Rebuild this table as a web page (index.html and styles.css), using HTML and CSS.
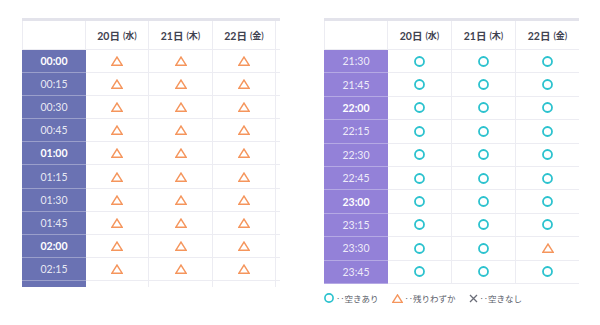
FILE: index.html
```html
<!DOCTYPE html>
<html lang="ja">
<head>
<meta charset="utf-8">
<title>空き状況</title>
<link rel="stylesheet" href="styles.css">
</head>
<body>
<svg class="defs" width="0" height="0" aria-hidden="true">
  <symbol id="tri" viewBox="0 0 11 9"><polygon points="5.5,0.9 10.2,8.3 0.8,8.3" fill="none" stroke="#f5955c" stroke-width="1.35" stroke-linejoin="miter"/></symbol>
  <symbol id="ok" viewBox="0 0 11 11"><circle cx="5.5" cy="5.5" r="4.5" fill="none" stroke="#2bc2ce" stroke-width="1.8"/></symbol>
  <symbol id="ng" viewBox="0 0 9 9"><path d="M1 1L8 8M8 1L1 8" fill="none" stroke="#6a6d78" stroke-width="1.3"/></symbol>
</svg>
<div class="page">
  <section class="sheet sheet--left">
    <div class="row head">
      <div class="cell corner"></div>
      <div class="cell day">20日<small>(水)</small></div>
      <div class="cell day">21日<small>(木)</small></div>
      <div class="cell day">22日<small>(金)</small></div>
      <div class="cell extra"></div>
    </div>
    <div class="row"><div class="cell time strong">00:00</div><div class="cell"><svg class="i-tri"><use href="#tri"/></svg></div><div class="cell"><svg class="i-tri"><use href="#tri"/></svg></div><div class="cell"><svg class="i-tri"><use href="#tri"/></svg></div><div class="cell extra"></div></div>
    <div class="row"><div class="cell time">00:15</div><div class="cell"><svg class="i-tri"><use href="#tri"/></svg></div><div class="cell"><svg class="i-tri"><use href="#tri"/></svg></div><div class="cell"><svg class="i-tri"><use href="#tri"/></svg></div><div class="cell extra"></div></div>
    <div class="row"><div class="cell time">00:30</div><div class="cell"><svg class="i-tri"><use href="#tri"/></svg></div><div class="cell"><svg class="i-tri"><use href="#tri"/></svg></div><div class="cell"><svg class="i-tri"><use href="#tri"/></svg></div><div class="cell extra"></div></div>
    <div class="row"><div class="cell time">00:45</div><div class="cell"><svg class="i-tri"><use href="#tri"/></svg></div><div class="cell"><svg class="i-tri"><use href="#tri"/></svg></div><div class="cell"><svg class="i-tri"><use href="#tri"/></svg></div><div class="cell extra"></div></div>
    <div class="row"><div class="cell time strong">01:00</div><div class="cell"><svg class="i-tri"><use href="#tri"/></svg></div><div class="cell"><svg class="i-tri"><use href="#tri"/></svg></div><div class="cell"><svg class="i-tri"><use href="#tri"/></svg></div><div class="cell extra"></div></div>
    <div class="row"><div class="cell time">01:15</div><div class="cell"><svg class="i-tri"><use href="#tri"/></svg></div><div class="cell"><svg class="i-tri"><use href="#tri"/></svg></div><div class="cell"><svg class="i-tri"><use href="#tri"/></svg></div><div class="cell extra"></div></div>
    <div class="row"><div class="cell time">01:30</div><div class="cell"><svg class="i-tri"><use href="#tri"/></svg></div><div class="cell"><svg class="i-tri"><use href="#tri"/></svg></div><div class="cell"><svg class="i-tri"><use href="#tri"/></svg></div><div class="cell extra"></div></div>
    <div class="row"><div class="cell time">01:45</div><div class="cell"><svg class="i-tri"><use href="#tri"/></svg></div><div class="cell"><svg class="i-tri"><use href="#tri"/></svg></div><div class="cell"><svg class="i-tri"><use href="#tri"/></svg></div><div class="cell extra"></div></div>
    <div class="row"><div class="cell time strong">02:00</div><div class="cell"><svg class="i-tri"><use href="#tri"/></svg></div><div class="cell"><svg class="i-tri"><use href="#tri"/></svg></div><div class="cell"><svg class="i-tri"><use href="#tri"/></svg></div><div class="cell extra"></div></div>
    <div class="row"><div class="cell time">02:15</div><div class="cell"><svg class="i-tri"><use href="#tri"/></svg></div><div class="cell"><svg class="i-tri"><use href="#tri"/></svg></div><div class="cell"><svg class="i-tri"><use href="#tri"/></svg></div><div class="cell extra"></div></div>
    <div class="row"><div class="cell time"></div><div class="cell"></div><div class="cell"></div><div class="cell"></div><div class="cell extra"></div></div>
  </section>

  <div class="col-right">
    <section class="sheet sheet--right">
      <div class="row head">
        <div class="cell corner"></div>
        <div class="cell day">20日<small>(水)</small></div>
        <div class="cell day">21日<small>(木)</small></div>
        <div class="cell day last">22日<small>(金)</small></div>
      </div>
      <div class="row"><div class="cell time">21:30</div><div class="cell"><svg class="i-ok"><use href="#ok"/></svg></div><div class="cell"><svg class="i-ok"><use href="#ok"/></svg></div><div class="cell last"><svg class="i-ok"><use href="#ok"/></svg></div></div>
      <div class="row"><div class="cell time">21:45</div><div class="cell"><svg class="i-ok"><use href="#ok"/></svg></div><div class="cell"><svg class="i-ok"><use href="#ok"/></svg></div><div class="cell last"><svg class="i-ok"><use href="#ok"/></svg></div></div>
      <div class="row"><div class="cell time strong">22:00</div><div class="cell"><svg class="i-ok"><use href="#ok"/></svg></div><div class="cell"><svg class="i-ok"><use href="#ok"/></svg></div><div class="cell last"><svg class="i-ok"><use href="#ok"/></svg></div></div>
      <div class="row"><div class="cell time">22:15</div><div class="cell"><svg class="i-ok"><use href="#ok"/></svg></div><div class="cell"><svg class="i-ok"><use href="#ok"/></svg></div><div class="cell last"><svg class="i-ok"><use href="#ok"/></svg></div></div>
      <div class="row"><div class="cell time">22:30</div><div class="cell"><svg class="i-ok"><use href="#ok"/></svg></div><div class="cell"><svg class="i-ok"><use href="#ok"/></svg></div><div class="cell last"><svg class="i-ok"><use href="#ok"/></svg></div></div>
      <div class="row"><div class="cell time">22:45</div><div class="cell"><svg class="i-ok"><use href="#ok"/></svg></div><div class="cell"><svg class="i-ok"><use href="#ok"/></svg></div><div class="cell last"><svg class="i-ok"><use href="#ok"/></svg></div></div>
      <div class="row"><div class="cell time strong">23:00</div><div class="cell"><svg class="i-ok"><use href="#ok"/></svg></div><div class="cell"><svg class="i-ok"><use href="#ok"/></svg></div><div class="cell last"><svg class="i-ok"><use href="#ok"/></svg></div></div>
      <div class="row"><div class="cell time">23:15</div><div class="cell"><svg class="i-ok"><use href="#ok"/></svg></div><div class="cell"><svg class="i-ok"><use href="#ok"/></svg></div><div class="cell last"><svg class="i-ok"><use href="#ok"/></svg></div></div>
      <div class="row"><div class="cell time">23:30</div><div class="cell"><svg class="i-ok"><use href="#ok"/></svg></div><div class="cell"><svg class="i-ok"><use href="#ok"/></svg></div><div class="cell last"><svg class="i-tri"><use href="#tri"/></svg></div></div>
      <div class="row"><div class="cell time">23:45</div><div class="cell"><svg class="i-ok"><use href="#ok"/></svg></div><div class="cell"><svg class="i-ok"><use href="#ok"/></svg></div><div class="cell last"><svg class="i-ok"><use href="#ok"/></svg></div></div>
    </section>
    <ul class="legend">
      <li class="legend-item"><svg class="i-ok"><use href="#ok"/></svg><span>‥空きあり</span></li>
      <li class="legend-item"><svg class="i-tri"><use href="#tri"/></svg><span>‥残りわずか</span></li>
      <li class="legend-item"><svg class="i-ng"><use href="#ng"/></svg><span>‥空きなし</span></li>
    </ul>
  </div>
</div>
</body>
</html>
```

FILE: styles.css
```css
html, body {
  margin: 0;
  padding: 0;
  background: #ffffff;
}

body {
  font-family: "Lato", "Noto Sans CJK JP", sans-serif;
  color: #40434f;
}

.defs {
  position: absolute;
  width: 0;
  height: 0;
  overflow: hidden;
}

.page {
  display: flex;
  align-items: flex-start;
  gap: 44px;
  padding: 18px 0 0 22px;
}

.sheet {
  border-top: 3px solid #e3e3eb;
  overflow: hidden;
  background: #fff;
}

.sheet--left {
  width: 258px;
  height: 266px;
  --row-h: 23.1px;
}

.sheet--right {
  width: 255px;
  --row-h: 23.4px;
}

.row {
  display: grid;
  height: var(--row-h);
}

.sheet--left .row {
  grid-template-columns: 64px 63px 64px 63px 63px;
}

.sheet--right .row {
  grid-template-columns: 64px 64px 64px 63px;
}

.row.head {
  height: 29px;
}

.cell {
  box-sizing: border-box;
  display: flex;
  align-items: center;
  justify-content: center;
  border-right: 1px solid #ececf2;
  border-bottom: 1px solid #ececf2;
  min-width: 0;
}

.cell.last {
  border-right: none;
}

.corner {
  border-left: 1px solid #ececf2;
}

.day {
  font-size: 10.5px;
  font-weight: 700;
  color: #3f4250;
  white-space: nowrap;
}

.day small {
  font-family: "Lato", "Noto Sans CJK JP", sans-serif;
  font-size: 9px;
  font-weight: 600;
  margin-left: 3px;
}

.time {
  font-size: 10.5px;
  font-weight: 400;
  color: rgba(255, 255, 255, 0.86);
  border-right: none;
  border-bottom: 1px solid rgba(255, 255, 255, 0.32);
}

.time.strong {
  font-weight: 700;
  color: #ffffff;
}

.sheet--left .time {
  background: #6a72b3;
}

.sheet--right .time {
  background: #9381d8;
}

.i-tri {
  width: 12px;
  height: 10px;
  display: block;
}

.i-ok {
  width: 11px;
  height: 11px;
  display: block;
}

.i-ng {
  width: 9px;
  height: 9px;
  display: block;
}

.col-right {
  display: flex;
  flex-direction: column;
}

.legend {
  list-style: none;
  margin: 9px 0 0 0;
  padding: 0;
  display: flex;
  align-items: center;
  gap: 13px;
}

.legend-item {
  display: flex;
  align-items: center;
  gap: 2px;
  font-family: "Noto Sans CJK JP", sans-serif;
  font-size: 8.5px;
  line-height: 11px;
  color: #5b5e6a;
}

.legend-item .i-ok {
  width: 10px;
  height: 10px;
}

.legend-item .i-tri {
  width: 11px;
  height: 9px;
}
```
